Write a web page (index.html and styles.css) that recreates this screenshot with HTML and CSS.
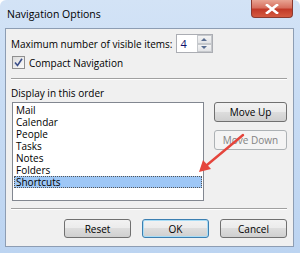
FILE: index.html
```html
<!DOCTYPE html>
<html lang="en">
<head>
    <meta charset="UTF-8">
    <title>Navigation Options</title>
    <link rel="stylesheet" href="styles.css">
</head>
<body>
    <div class="window">
        <div class="titlebar">
            <span class="title">Navigation Options</span>
            <div class="close">
                <svg width="14" height="10" viewBox="0 0 14 10">
                    <path d="M2 1 L12 9 M12 1 L2 9" stroke="#fff" stroke-width="2.6" stroke-linecap="square"/>
                </svg>
            </div>
        </div>
        <div class="client">
            <div class="row max-row">
                <span>Maximum number of visible items:</span>
                <div class="spinner">
                    <div class="spin-value">4</div>
                    <div class="spin-buttons">
                        <div class="spin-btn"><span class="tri up"></span></div>
                        <div class="spin-btn"><span class="tri down"></span></div>
                    </div>
                </div>
            </div>
            <div class="row check-row">
                <span class="checkbox">
                    <svg width="9" height="9" viewBox="0 0 9 9">
                        <path d="M1 4.5 L3.5 7.5 L8 0.8" fill="none" stroke="#3b4f8a" stroke-width="1.6"/>
                    </svg>
                </span>
                <span>Compact Navigation</span>
            </div>
            <div class="separator"></div>
            <div class="group-label">Display in this order</div>
            <div class="order-area">
                <ul class="listbox">
                    <li>Mail</li>
                    <li>Calendar</li>
                    <li>People</li>
                    <li>Tasks</li>
                    <li>Notes</li>
                    <li>Folders</li>
                    <li class="selected">Shortcuts</li>
                </ul>
                <div class="side-buttons">
                    <button class="btn">Move Up</button>
                    <button class="btn" disabled>Move Down</button>
                </div>
            </div>
            <div class="separator bottom-sep"></div>
            <div class="footer">
                <button class="btn">Reset</button>
                <button class="btn default">OK</button>
                <button class="btn">Cancel</button>
            </div>
        </div>
        <svg class="arrow" width="300" height="253" viewBox="0 0 300 253">
            <line x1="243" y1="135" x2="207" y2="165" stroke="#e5453c" stroke-width="2.4" stroke-linecap="round"/>
            <path d="M199 172 L203 160 L211 169 Z" fill="#e5453c"/>
        </svg>
    </div>
</body>
</html>
```

FILE: styles.css
```css
body {
    margin: 0;
    font-family: "Open Sans", "Noto Sans", sans-serif;
    font-size: 10px;
    color: #000;
    background: #fff;
}
.window {
    position: relative;
    width: 300px;
    height: 253px;
    box-sizing: border-box;
    padding: 0 6px 6px 5px;
    display: flex;
    flex-direction: column;
    background: linear-gradient(180deg, #d3e3f6 0%, #c8dcf4 40%, #bcd4f1 100%);
    border-radius: 6px 6px 0 0;
}
.titlebar {
    height: 28px;
    display: flex;
    align-items: flex-start;
    justify-content: space-between;
}
.title {
    margin: 7px 0 0 2px;
    font-size: 10.5px;
}
.close {
    width: 42px;
    height: 18px;
    margin-right: 1px;
    box-sizing: border-box;
    border: 1px solid #8b3a30;
    border-top: none;
    border-radius: 0 0 4px 4px;
    background: linear-gradient(180deg, #e8a493 0%, #d7705f 45%, #c23a28 55%, #d45a40 100%);
    display: flex;
    align-items: center;
    justify-content: center;
}
.client {
    flex: 1;
    background: #f0f0f0;
    border: 1px solid #8d9db3;
    padding: 5px 6px 0 5px;
    display: flex;
    flex-direction: column;
}
.row {
    display: flex;
    align-items: center;
}
.max-row {
    height: 19px;
    gap: 3px;
}
.spinner {
    width: 37px;
    height: 19px;
    box-sizing: border-box;
    border: 1px solid #abadb3;
    background: #fff;
    display: flex;
}
.spin-value {
    flex: 1;
    padding: 1px 0 0 4px;
    font-size: 11px;
    color: #10106b;
}
.spin-buttons {
    width: 15px;
    display: flex;
    flex-direction: column;
}
.spin-btn {
    flex: 1;
    border: 1px solid #c5c8cc;
    background: linear-gradient(180deg, #f4f4f4, #e2e3e6);
    display: flex;
    align-items: center;
    justify-content: center;
}
.tri {
    width: 0;
    height: 0;
    border-left: 3px solid transparent;
    border-right: 3px solid transparent;
}
.tri.up {
    border-bottom: 3px solid #5a6e91;
}
.tri.down {
    border-top: 3px solid #5a6e91;
}
.check-row {
    height: 15px;
    margin-top: 2px;
    gap: 4px;
    padding-left: 1px;
}
.checkbox {
    width: 13px;
    height: 13px;
    box-sizing: border-box;
    border: 1px solid #8f8f8f;
    background: linear-gradient(135deg, #dcdcdc, #fbfbfb);
    display: flex;
    align-items: center;
    justify-content: center;
}
.separator {
    height: 1px;
    background: #a0a0a0;
    border-bottom: 1px solid #fff;
    margin-top: 8px;
}
.group-label {
    margin-top: 6px;
    height: 15px;
}
.order-area {
    display: flex;
    margin-top: 1px;
    gap: 10px;
}
.listbox {
    list-style: none;
    margin: 0 0 0 1px;
    padding: 1px;
    width: 192px;
    height: 99px;
    box-sizing: border-box;
    border: 1px solid #828790;
    background: #fff;
}
.listbox li {
    height: 12px;
    line-height: 12px;
    padding-left: 2px;
}
.listbox li.selected {
    background: #9ec7f6;
    outline: 1px dotted #555;
    outline-offset: -1px;
}
.side-buttons {
    display: flex;
    flex-direction: column;
    gap: 8px;
}
.btn {
    width: 73px;
    height: 20px;
    box-sizing: border-box;
    border: 1px solid #707070;
    border-radius: 3px;
    font-family: inherit;
    font-size: 10px;
    color: #000;
    padding: 0;
    background: linear-gradient(180deg, #f2f2f2 0%, #ebebeb 49%, #dddddd 50%, #cfcfcf 100%);
}
.btn:disabled {
    border-color: #adb2b5;
    background: #f4f4f4;
    color: #838383;
}
.btn.default {
    border-color: #3c7fb1;
    box-shadow: inset 0 0 0 1px #a8dcf5;
}
.bottom-sep {
    margin-top: 7px;
}
.footer {
    display: flex;
    justify-content: flex-end;
    gap: 11px;
    margin-top: 9px;
}
.footer .btn {
    width: 67px;
    height: 19px;
}
.arrow {
    position: absolute;
    left: 0;
    top: 0;
    pointer-events: none;
}
```
